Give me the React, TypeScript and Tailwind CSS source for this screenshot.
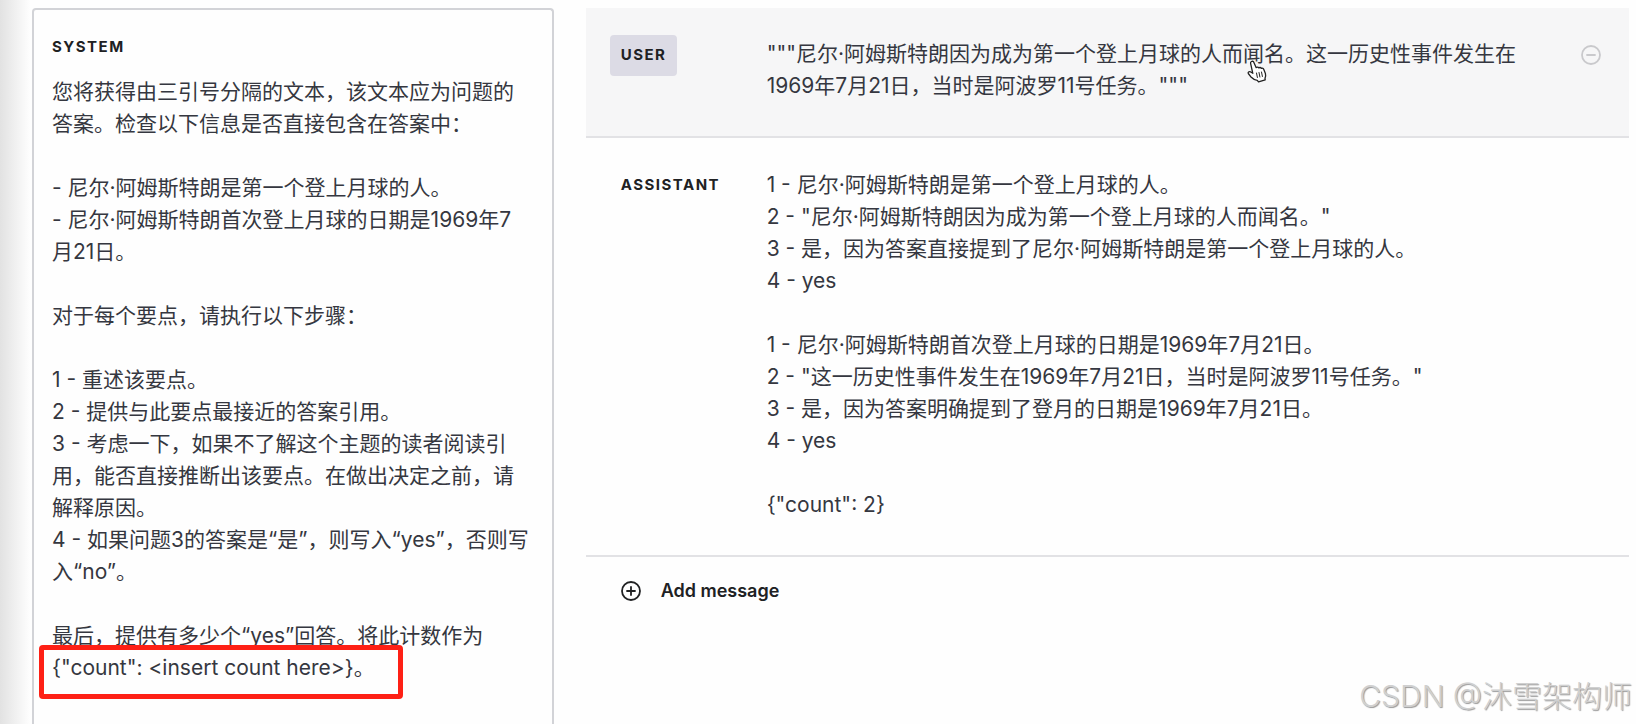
import { useState } from "react";

const SYSTEM_PROMPT = `您将获得由三引号分隔的文本，该文本应为问题的
答案。检查以下信息是否直接包含在答案中：

- 尼尔·阿姆斯特朗是第一个登上月球的人。
- 尼尔·阿姆斯特朗首次登上月球的日期是1969年7
月21日。

对于每个要点，请执行以下步骤：

1 - 重述该要点。
2 - 提供与此要点最接近的答案引用。
3 - 考虑一下，如果不了解这个主题的读者阅读引
用，能否直接推断出该要点。在做出决定之前，请
解释原因。
4 - 如果问题3的答案是“是”，则写入“yes”，否则写
入“no”。

最后，提供有多少个“yes”回答。将此计数作为
{"count": <insert count here>}。`;

const USER_MESSAGE = `"""尼尔·阿姆斯特朗因为成为第一个登上月球的人而闻名。这一历史性事件发生在
1969年7月21日，当时是阿波罗11号任务。"""`;

const ASSISTANT_MESSAGE = `1 - 尼尔·阿姆斯特朗是第一个登上月球的人。
2 - "尼尔·阿姆斯特朗因为成为第一个登上月球的人而闻名。"
3 - 是，因为答案直接提到了尼尔·阿姆斯特朗是第一个登上月球的人。
4 - yes

1 - 尼尔·阿姆斯特朗首次登上月球的日期是1969年7月21日。
2 - "这一历史性事件发生在1969年7月21日，当时是阿波罗11号任务。"
3 - 是，因为答案明确提到了登月的日期是1969年7月21日。
4 - yes

{"count": 2}`;

function HandCursor() {
  return (
    <svg
      className="pointer-events-none absolute left-[661px] top-[52px]"
      width="21"
      height="23"
      viewBox="0 0 21 23"
      aria-hidden="true"
    >
      <path
        d="M4.5 1.5c1.2-.6 2 0 2.500 1.200l2.200 5c.6-.8 2-.8 2.600.2.800-.7 2.100-.5 2.600.5 1-.5 2 .1 2.400 1.100l1.600 4c.6 2 .1 3.500-.4 4.700l.2 1.600-6.700 2-1.200-1.500c-2.800-.3-4.700-1.700-6.600-3.600L1.300 13.500c-.6-1.200.7-2.300 2-1.700l2.500 1.500L3.600 3.400c-.2-.8.1-1.500.9-1.900z"
        fill="#fff"
        stroke="#222"
        strokeWidth="1.300"
        strokeLinejoin="round"
      />
      <path
        d="M9.500 13l.9 4.500M12 12.500l.9 4.500M14.500 12l.9 4.500"
        stroke="#222"
        strokeWidth="1"
        strokeLinecap="round"
      />
    </svg>
  );
}

function CircleIcon({ plus }: { plus?: boolean }) {
  return (
    <svg
      width="20"
      height="20"
      viewBox="0 0 20 20"
      fill="none"
      stroke="currentColor"
      strokeWidth="1.800"
      strokeLinecap="round"
      aria-hidden="true"
    >
      <circle cx="10" cy="10" r="9" />
      <path d={plus ? "M6 10h8M10 6v8" : "M6 10h8"} />
    </svg>
  );
}

export default function App() {
  const [system, setSystem] = useState<string>(SYSTEM_PROMPT);
  const [user, setUser] = useState<string>(USER_MESSAGE);
  const [assistant, setAssistant] = useState<string>(ASSISTANT_MESSAGE);

  return (
    <div className="relative h-screen overflow-hidden bg-[#fefefe] bg-linear-to-r from-[#e2e2e2] to-[#fefefe] to-[30px] font-[Inter,'Noto_Sans_CJK_SC',sans-serif] text-[#353740]">
      <main className="grid h-full grid-cols-[1fr_2fr] gap-8 pt-2 pr-[7px] pl-8">
        <section className="rounded-t border-2 border-b-0 border-[#d2d3d7] bg-[#fefefe] px-[18px] pt-[27px]">
          <label
            htmlFor="system"
            className="block text-[15px] leading-5 font-bold tracking-widest text-[#202123]"
          >
            SYSTEM
          </label>
          <div className="relative mt-[19px]">
            <textarea
              id="system"
              rows={19}
              value={system}
              onChange={(e) => setSystem(e.target.value)}
              className="block w-full resize-none overflow-hidden text-[21px] leading-8 outline-none"
            />
            <div className="pointer-events-none absolute -bottom-[15px] -left-[13px] h-[54px] w-[364px] rounded border-[5px] border-[#fe2015]" />
          </div>
        </section>

        <section>
          <div className="relative flex items-start border-b-2 border-[#e2e2e5] bg-[#f6f6f7] pt-[27px] pr-[28px] pb-[34px] pl-6">
            <div className="w-[157px] shrink-0">
              <button className="h-[41px] rounded-sm bg-[#dcdbe5] px-[11px] text-[15px] font-bold tracking-widest text-[#202123]">
                USER
              </button>
            </div>
            <textarea
              aria-label="User message"
              rows={2}
              value={user}
              onChange={(e) => setUser(e.target.value)}
              className="mt-[3px] block min-w-0 flex-1 resize-none overflow-hidden text-[21px] leading-8 outline-none"
            />
            <button className="mt-[10px] ml-4 text-[#c9c9cc]" aria-label="Remove message">
              <CircleIcon />
            </button>
            <HandCursor />
          </div>

          <div className="flex items-start border-b-2 border-[#e2e2e5] pt-[31px] pr-[28px] pb-[34px] pl-6">
            <div className="w-[157px] shrink-0">
              <button className="h-8 px-[11px] text-[15px] font-bold tracking-widest text-[#202123]">
                ASSISTANT
              </button>
            </div>
            <textarea
              aria-label="Assistant message"
              rows={11}
              value={assistant}
              onChange={(e) => setAssistant(e.target.value)}
              className="block min-w-0 flex-1 resize-none overflow-hidden text-[21px] leading-8 outline-none"
            />
          </div>

          <button className="flex items-center gap-5 px-[35px] py-5 text-[18px] leading-7 font-semibold text-[#202123]">
            <CircleIcon plus />
            Add message
          </button>
        </section>
      </main>

      <p className="pointer-events-none absolute right-1 bottom-2 text-[30px] leading-10 font-light text-[#d0d0d0] [text-shadow:1px_1px_1px_#999]">
        CSDN @沐雪架构师
      </p>
    </div>
  );
}
